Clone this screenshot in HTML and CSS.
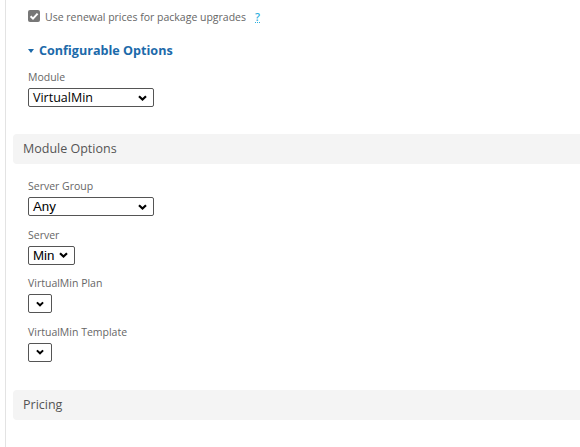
FILE: index.html
```html
<!DOCTYPE html>
<html>
<head>
<meta charset="utf-8">
<link rel="stylesheet" href="styles.css">
</head>
<body>
<div class="page">
  <div class="inner">
    <div class="check-row">
      <span class="checkbox"><svg width="12" height="12" viewBox="0 0 12 12"><path d="M2.6 6.2 L5 8.6 L9.6 3.6" fill="none" stroke="#fff" stroke-width="2"/></svg></span>
      <span class="check-label">Use renewal prices for package upgrades</span>
      <span class="help">?</span>
    </div>
    <div class="config-title"><span class="caret"></span>Configurable Options</div>
    <div class="field">
      <div class="label">Module</div>
      <div class="select wide"><span class="val os">VirtualMin</span><svg class="chev" width="9" height="6" viewBox="0 0 9 6"><path d="M1 1.2 L4.5 4.5 L8 1.2" fill="none" stroke="#000" stroke-width="2.2"/></svg></div>
    </div>
  </div>
  <div class="section-bar">Module Options</div>
  <div class="inner fields">
    <div class="field">
      <div class="label">Server Group</div>
      <div class="select wide"><span class="val">Any</span><svg class="chev" width="9" height="6" viewBox="0 0 9 6"><path d="M1 1.2 L4.5 4.5 L8 1.2" fill="none" stroke="#000" stroke-width="2.2"/></svg></div>
    </div>
    <div class="field">
      <div class="label">Server</div>
      <div class="select"><span class="val">Min</span><svg class="chev" width="9" height="6" viewBox="0 0 9 6"><path d="M1 1.2 L4.5 4.5 L8 1.2" fill="none" stroke="#000" stroke-width="2.2"/></svg></div>
    </div>
    <div class="field">
      <div class="label">VirtualMin Plan</div>
      <div class="select empty"><svg class="chev" width="9" height="6" viewBox="0 0 9 6"><path d="M1 1.2 L4.5 4.5 L8 1.2" fill="none" stroke="#000" stroke-width="2.2"/></svg></div>
    </div>
    <div class="field">
      <div class="label">VirtualMin Template</div>
      <div class="select empty"><svg class="chev" width="9" height="6" viewBox="0 0 9 6"><path d="M1 1.2 L4.5 4.5 L8 1.2" fill="none" stroke="#000" stroke-width="2.2"/></svg></div>
    </div>
  </div>
  <div class="section-bar pricing">Pricing</div>
</div>
</body>
</html>
```

FILE: styles.css
```css
html, body {
  margin: 0;
  padding: 0;
  background: #fff;
}
body {
  font-family: "Open Sans", sans-serif;
  color: #666;
  height: 447px;
  overflow: hidden;
}
.page {
  margin-left: 5px;
  border-left: 1px solid #e3e3e3;
  padding-left: 7px;
  height: 447px;
}
.inner {
  padding-left: 15px;
}
.check-row {
  display: flex;
  align-items: center;
  padding-top: 10px;
  height: 12px;
}
.checkbox {
  width: 12px;
  height: 12px;
  background: #777;
  border-radius: 2px;
  display: block;
}
.checkbox svg { display: block; }
.check-label {
  font-size: 10.5px;
  margin-left: 5px;
  color: #666;
  line-height: 12px;
  padding-top: 2px;
}
.help {
  font-size: 11px;
  color: #2eb0de;
  font-weight: 600;
  margin-left: 9px;
  border-bottom: 1px dotted #2eb0de;
  line-height: 11px;
  padding-top: 2px;
}
.config-title {
  margin-top: 20px;
  font-size: 12.6px;
  font-weight: 700;
  color: #1c6aaa;
  line-height: 18px;
  display: flex;
  align-items: center;
}
.caret {
  width: 0;
  height: 0;
  border-left: 3.5px solid transparent;
  border-right: 3.5px solid transparent;
  border-top: 4px solid #1c6aaa;
  margin-right: 5px;
}
.field {
  display: flex;
  flex-direction: column;
  align-items: flex-start;
}
.label {
  font-size: 10.5px;
  line-height: 17px;
  color: #666;
}
.config-title + .field { margin-top: 9px; }
.config-title + .field .select { margin-top: 2px; }
.select {
  margin-top: 2px;
  box-sizing: border-box;
  height: 19px;
  border: 1px solid #555;
  border-radius: 2px;
  display: flex;
  align-items: center;
  justify-content: space-between;
  padding: 0 6px 0 4px;
  gap: 5px;
  color: #000;
  font-family: "Liberation Sans", Arial, sans-serif;
  font-size: 13.3px;
}
.select.wide { width: 126px; }
.select.empty { width: 24px; padding: 0 7px; justify-content: center; }
.val.os { font-family: "Open Sans", sans-serif; font-size: 12.5px; }
.chev { display: block; }
.section-bar {
  margin-top: 27px;
  height: 30px;
  background: #f4f4f4;
  border-radius: 4px 0 0 4px;
  font-size: 12.5px;
  color: #555;
  line-height: 30px;
  padding-left: 10px;
}
.fields { padding-top: 14px; }
.fields .field + .field { margin-top: 10.5px; }
.pricing { margin-top: 28.5px; }
```
